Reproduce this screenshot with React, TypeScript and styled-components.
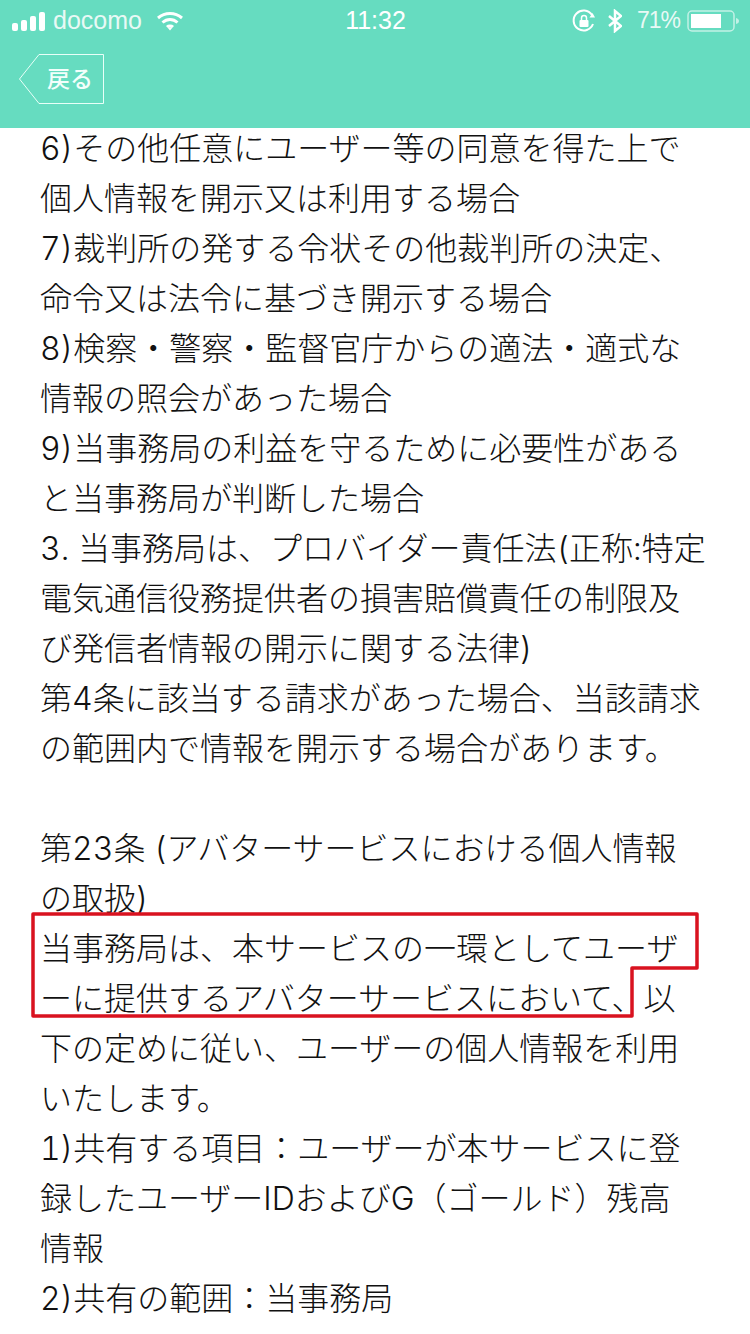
import React from "react";
import styled, { createGlobalStyle } from "styled-components";

const GlobalStyle = createGlobalStyle`
  html, body {
    margin: 0;
    padding: 0;
    background: #fff;
  }
`;

const LINES = [
  "6)その他任意にユーザー等の同意を得た上で",
  "個人情報を開示又は利用する場合",
  "7)裁判所の発する令状その他裁判所の決定、",
  "命令又は法令に基づき開示する場合",
  "8)検察・警察・監督官庁からの適法・適式な",
  "情報の照会があった場合",
  "9)当事務局の利益を守るために必要性がある",
  "と当事務局が判断した場合",
  "3. 当事務局は、プロバイダー責任法(正称:特定",
  "電気通信役務提供者の損害賠償責任の制限及",
  "び発信者情報の開示に関する法律)",
  "第4条に該当する請求があった場合、当該請求",
  "の範囲内で情報を開示する場合があります。",
  "",
  "第23条 (アバターサービスにおける個人情報",
  "の取扱)",
  "当事務局は、本サービスの一環としてユーザ",
  "ーに提供するアバターサービスにおいて、以",
  "下の定めに従い、ユーザーの個人情報を利用",
  "いたします。",
  "1)共有する項目：ユーザーが本サービスに登",
  "録したユーザーIDおよびG（ゴールド）残高",
  "情報",
  "2)共有の範囲：当事務局",
];

const styles = {
  Page: styled.div`
    position: relative;
    width: 750px;
    height: 1334px;
    overflow: hidden;
    background: #fff;
  `,
  Header: styled.header`
    position: relative;
    z-index: 1;
    height: 128px;
    background: #66dcc0;
    display: flex;
    flex-direction: column;
  `,
  StatusBar: styled.div`
    height: 41px;
    padding: 0 11px 0 12px;
    display: flex;
    align-items: center;
    justify-content: space-between;
    color: #fff;
    font-family: "Liberation Sans", Arial, sans-serif;
    font-size: 25px;
  `,
  StatusSide: styled.div`
    flex: 1;
    display: flex;
    align-items: center;
    justify-content: ${(props: { $end?: boolean }) => (props.$end ? "flex-end" : "flex-start")};
  `,
  Carrier: styled.span`
    margin: 0 14px 0 8px;
    opacity: 0.85;
  `,
  Clock: styled.span`
    font-weight: 500;
  `,
  LockGap: styled.span`
    width: 12px;
  `,
  Percent: styled.span`
    margin: 0 7px 0 15px;
    font-size: 23px;
    letter-spacing: -1px;
    opacity: 0.85;
  `,
  NavBar: styled.div`
    padding: 13px 0 0 19px;
    display: flex;
  `,
  BackButton: styled.a`
    width: 85px;
    height: 50px;
    position: relative;
    display: flex;
    align-items: center;
    justify-content: flex-end;
    padding: 0 11px 4px 0;
    box-sizing: border-box;
    color: #f2fffb;
    font-family: "Noto Sans CJK JP", sans-serif;
    font-size: 23px;
    font-weight: 500;
  `,
  BackOutline: styled.svg`
    position: absolute;
    inset: 0;
  `,
  Main: styled.main`
    position: relative;
    margin-top: -4px;
    padding-left: 40px;
    color: #111;
    font-family: Inter, "Noto Sans CJK JP", sans-serif;
    font-size: 32px;
    font-weight: 300;
    font-variant-numeric: tabular-nums;
    line-height: 50px;
  `,
  Line: styled.div`
    height: 50px;
    white-space: pre;
  `,
  Highlight: styled.svg`
    position: absolute;
    left: 0;
    top: 0;
    pointer-events: none;
  `,
};

const SignalBars = () => (
  <svg width="33" height="20" viewBox="0 0 33 20" fill="#fff">
    <rect x="0" y="12" width="6" height="8" rx="2" />
    <rect x="9" y="9" width="6" height="11" rx="2" />
    <rect x="18" y="5" width="6" height="15" rx="2" />
    <rect x="27" y="1" width="6" height="19" rx="2" />
  </svg>
);

const Wifi = () => (
  <svg width="28" height="20" viewBox="0 0 28 20" fill="none" stroke="#fff" strokeWidth="3">
    <path d="M2 7C9 1 19 1 26 7" />
    <path d="M6.500 11.500C11 7.500 17 7.500 21.500 11.500" />
    <path d="M11 16C12.500 14.600 15.500 14.600 17 16" />
    <path d="M14 19.500L11.500 16.500H16.500Z" fill="#fff" stroke="none" />
  </svg>
);

const RotationLock = () => (
  <svg width="24" height="24" viewBox="0 0 24 24" fill="none" stroke="#fff" strokeWidth="2">
    <path d="M21 15A10 10 0 1 1 20 6" />
    <path d="M17.500 8.500H23L20.500 4Z" fill="#fff" stroke="none" />
    <rect x="7.500" y="11" width="9" height="7" rx="1" fill="#fff" stroke="none" />
    <path d="M9.500 11V9A2.500 2.500 0 0 1 14.500 9V11" strokeWidth="1.500" />
  </svg>
);

const Bluetooth = () => (
  <svg width="14" height="24" viewBox="0 0 14 24" fill="none" stroke="#fff" strokeWidth="2.500">
    <path d="M1 7L13 17L7 22V2L13 7L1 17" />
  </svg>
);

const Battery = () => (
  <svg width="52" height="24" viewBox="0 0 52 24" fill="none">
    <rect x="1" y="2" width="46" height="20" rx="4" stroke="#fff" strokeOpacity="0.6" strokeWidth="1.500" />
    <rect x="4" y="5" width="30" height="14" fill="#fff" />
    <path d="M49 9C51 9.500 52 10.500 52 12C52 13.500 51 14.500 49 15Z" fill="#fff" fillOpacity="0.6" />
  </svg>
);

export default function App() {
  return (
    <styles.Page>
      <GlobalStyle />
      <styles.Header>
        <styles.StatusBar>
          <styles.StatusSide>
            <SignalBars />
            <styles.Carrier>docomo</styles.Carrier>
            <Wifi />
          </styles.StatusSide>
          <styles.Clock>11:32</styles.Clock>
          <styles.StatusSide $end>
            <RotationLock />
            <styles.LockGap />
            <Bluetooth />
            <styles.Percent>71%</styles.Percent>
            <Battery />
          </styles.StatusSide>
        </styles.StatusBar>
        <styles.NavBar>
          <styles.BackButton>
            <styles.BackOutline width="85" height="50" viewBox="0 0 85 50" fill="none">
              <path d="M84.500 .5H20L.5 25L20 49.500H84.500Z" stroke="#e8fff8" strokeWidth="1" />
            </styles.BackOutline>
            戻る
          </styles.BackButton>
        </styles.NavBar>
      </styles.Header>
      <styles.Main>
        {LINES.map((line, i) => (
          <styles.Line key={i}>{line}</styles.Line>
        ))}
        <styles.Highlight width="750" height="1210" viewBox="0 0 750 1210" fill="none">
          <path
            d="M33 790H697V844H632V892H33Z"
            stroke="#d9121f"
            strokeWidth="3.500"
            strokeLinejoin="round"
          />
        </styles.Highlight>
      </styles.Main>
    </styles.Page>
  );
}
